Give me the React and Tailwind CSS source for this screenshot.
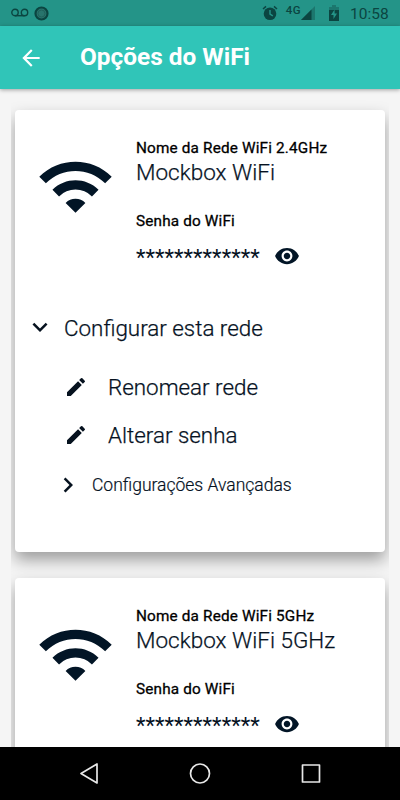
import { MdArrowBack, MdChevronRight, MdEdit, MdExpandMore, MdVisibility, MdWifi } from 'react-icons/md'

function StatusBar() {
  return (
    <div className="flex h-[26px] shrink-0 items-center bg-[#249488] pl-[11px] pr-[11px] text-[#0b4541]">
      <svg className="h-[10px] w-[18px]" viewBox="0 0 18 10" fill="none" stroke="currentColor" strokeWidth="1.4">
        <circle cx="4" cy="4.5" r="3.2" />
        <circle cx="13.5" cy="4.5" r="3.2" />
        <path d="M4 7.7h9.5" />
      </svg>
      <svg className="ml-[5px] h-[15px] w-[15px]" viewBox="0 0 15 15">
        <circle cx="7.5" cy="7.5" r="6" fill="#28746c" stroke="#0b4541" strokeWidth="2.2" />
        <circle cx="7.5" cy="7.5" r="3.5" fill="none" stroke="#20615b" strokeWidth="1" />
      </svg>
      <div className="flex-1" />
      <svg className="h-[16px] w-[16px]" viewBox="0 0 16 16">
        <circle cx="8" cy="8.8" r="6.3" fill="currentColor" />
        <path d="M1 4 4 1.4M15 4l-3-2.6" stroke="currentColor" strokeWidth="1.5" />
        <path d="M8 5v4l2.8 1.8" stroke="#249488" strokeWidth="1.4" fill="none" />
      </svg>
      <span className="mb-[4px] ml-[8px] text-[11.5px] leading-none font-medium tracking-[0.5px]">4G</span>
      <svg className="h-[14px] w-[14px]" viewBox="0 0 14 14">
        <path d="M0 14 14 0v14z" fill="#1c776e" />
        <path d="M0 14 10.5 3.5V14z" fill="currentColor" />
      </svg>
      <svg className="ml-[14px] h-[16px] w-[10px]" viewBox="0 0 10 16">
        <path d="M0 2h3V0h4v2h3v4H0z" fill="#1c776e" />
        <path d="M0 5h10v11H0z" fill="currentColor" />
        <path d="M5.6 4.5 2 10h2.5v4L8 8.5H5.6z" fill="#249488" />
      </svg>
      <span className="ml-[11px] mt-[3px] w-[39px] text-[15.5px] leading-none whitespace-nowrap">10:58</span>
    </div>
  )
}

function NetworkInfo({ label, name }) {
  return (
    <div className="flex pl-[21px]">
      <MdWifi className="mt-[37px] size-[79px] shrink-0 text-[#021526]" />
      <div className="flex flex-col pl-[21px] pt-[29px]">
        <span className="text-[15.3px] leading-[18px] tracking-[0.17px] whitespace-nowrap text-black [-webkit-text-stroke:0.3px]">{label}</span>
        <span className="mt-px text-[22.5px] leading-[28px] font-light whitespace-nowrap [-webkit-text-stroke:0.25px]">{name}</span>
        <span className="mt-[26px] text-[15.3px] leading-[18px] tracking-[0.17px] text-black [-webkit-text-stroke:0.3px]">Senha do WiFi</span>
        <div className="mt-[13px] flex h-[26px] items-center">
          <span className="mt-[2px] w-[138px] text-[22.1px] leading-[26px]">*************</span>
          <MdVisibility className="size-[26px] text-[#021526]" />
        </div>
      </div>
    </div>
  )
}

function Card({ children }) {
  return (
    <section className="h-[442px] shrink-0 rounded-[4px] bg-white shadow-[0_8px_16px_rgba(0,0,0,0.36)]">
      {children}
    </section>
  )
}

export default function App() {
  return (
    <div className="flex h-[800px] w-[400px] flex-col overflow-hidden bg-[#f5f5f5] font-['Roboto',sans-serif] text-[#06121f]">
      <StatusBar />
      <header className="z-10 flex h-[63px] shrink-0 items-center bg-[#30c5b8] pl-[18px] text-white shadow-[0_1px_4px_rgba(0,0,0,0.35)]">
        <MdArrowBack className="size-[26px]" />
        <h1 className="pl-[36px] text-[24.4px] leading-none font-bold whitespace-nowrap">Opções do WiFi</h1>
      </header>

      <main className="mx-[11px] flex min-h-0 flex-1 flex-col gap-[26px] overflow-hidden px-[4px] pt-[21px]">
        <Card>
          <NetworkInfo label="Nome da Rede WiFi 2.4GHz" name="Mockbox WiFi" />
          <div className="mt-[43px] flex h-[30px] items-center pl-[10px]">
            <MdExpandMore className="size-[30px]" />
            <span className="pl-[9px] pt-[2px] text-[22.4px] leading-none font-light [-webkit-text-stroke:0.25px]">Configurar esta rede</span>
          </div>
          <div className="mt-[21px] flex h-[48px] items-center pl-[49px]">
            <MdEdit className="size-[24px]" />
            <span className="pl-[20px] text-[22.4px] leading-none font-light [-webkit-text-stroke:0.25px]">Renomear rede</span>
          </div>
          <div className="flex h-[48px] items-center pl-[49px]">
            <MdEdit className="size-[24px]" />
            <span className="pl-[20px] text-[22.4px] leading-none font-light [-webkit-text-stroke:0.25px]">Alterar senha</span>
          </div>
          <div className="mt-[11px] flex h-[30px] items-center pl-[38px]">
            <MdChevronRight className="size-[30px]" />
            <span className="pl-[9px] pt-[2px] text-[17.5px] leading-none font-light [-webkit-text-stroke:0.2px]">Configurações Avançadas</span>
          </div>
        </Card>
        <Card>
          <NetworkInfo label="Nome da Rede WiFi 5GHz" name="Mockbox WiFi 5GHz" />
        </Card>
      </main>

      <nav className="z-10 flex h-[53px] shrink-0 items-center justify-between bg-black px-[77px] text-[#e8e8e8]">
        <svg className="size-[24px]" viewBox="0 0 24 24" fill="none" stroke="currentColor" strokeWidth="1.7" strokeLinejoin="round">
          <path d="M20 2v19L4 11.5z" />
        </svg>
        <svg className="size-[24px]" viewBox="0 0 24 24" fill="none" stroke="currentColor" strokeWidth="1.7">
          <circle cx="12" cy="11.5" r="9.5" />
        </svg>
        <svg className="size-[24px]" viewBox="0 0 24 24" fill="none" stroke="currentColor" strokeWidth="1.7" strokeLinejoin="round">
          <path d="M3.5 3h17v17h-17z" />
        </svg>
      </nav>
    </div>
  )
}
